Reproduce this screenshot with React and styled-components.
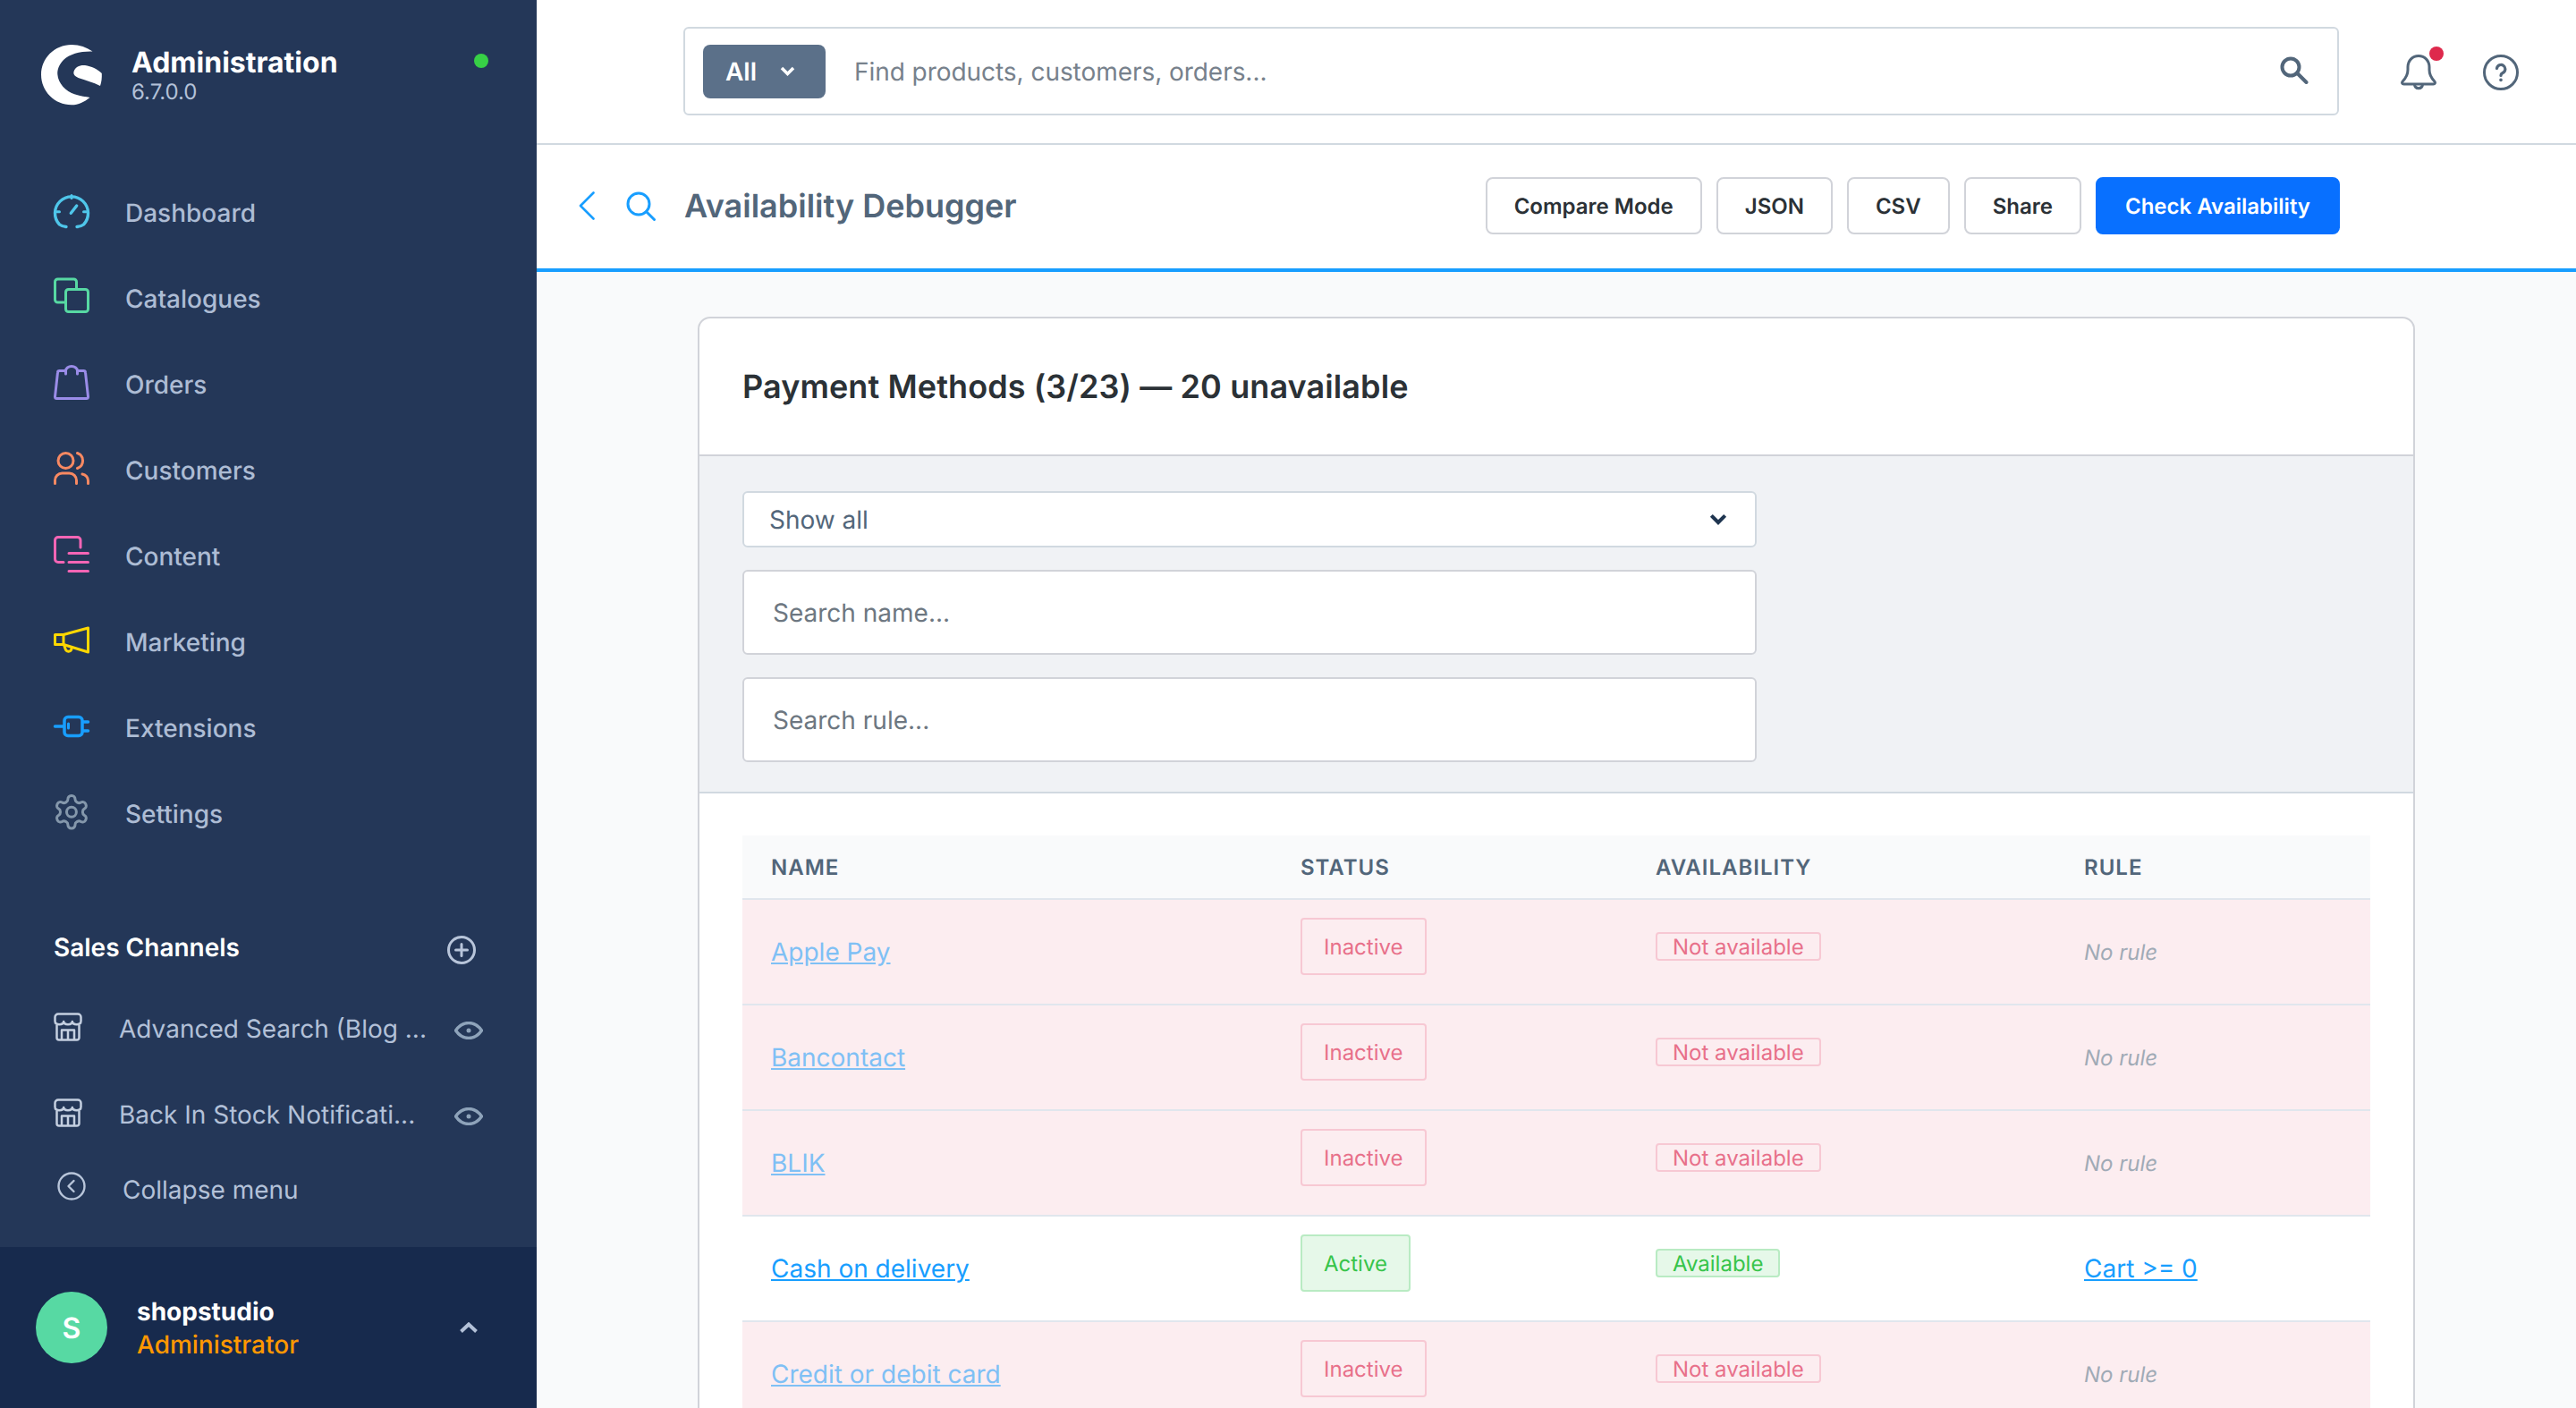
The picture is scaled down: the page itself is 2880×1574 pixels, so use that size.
import React from 'react';
import styled, { createGlobalStyle } from 'styled-components';

const Global = createGlobalStyle`
  html, body { margin: 0; padding: 0; height: 100%; overflow: hidden; background: #f9fafb; }
  body { font-family: Inter, "Liberation Sans", sans-serif; text-rendering: geometricPrecision; }
  * { box-sizing: border-box; }
  input, button { text-rendering: geometricPrecision; }
  #root { height: 100%; }
`;

const Shell = styled.div`
  display: grid;
  grid-template-columns: 600px 1fr;
  height: 1574px;
  overflow: hidden;
`;

const Sidebar = styled.aside`
  display: flex;
  flex-direction: column;
  background: #243758;
  color: #b3c1d8;
  height: 1574px;
`;

const Brand = styled.div`
  height: 190px;
  display: flex;
  align-items: flex-start;
  padding: 50px 54px 0 46px;
`;

const BrandText = styled.div`
  margin-left: 33px;
  flex: 1;
  padding-top: 1px;
`;

const BrandName = styled.div`
  font-size: 32px;
  font-weight: 700;
  line-height: 38px;
  color: #fff;
`;

const BrandVersion = styled.div`
  font-size: 24px;
  line-height: 28px;
  color: #b3c1d8;
`;

const StatusDot = styled.span`
  width: 16px;
  height: 16px;
  border-radius: 50%;
  background: #37d046;
  margin-top: 10px;
`;

const Nav = styled.nav`
  display: flex;
  flex-direction: column;
`;

const NavItem = styled.a`
  display: flex;
  align-items: center;
  height: 96px;
  padding-left: 60px;
  font-size: 28px;
  font-weight: 500;
  color: #adbcd4;
`;

const NavIcon = styled.svg`
  width: 40px;
  height: 44px;
  margin-right: 40px;
  margin-top: -4px;
  flex: none;
  fill: none;
  overflow: visible;
  stroke: ${(p) => p.$color};
  stroke-width: 3;
  stroke-linecap: round;
  stroke-linejoin: round;
`;

const SalesHeader = styled.div`
  display: flex;
  align-items: center;
  justify-content: space-between;
  height: 50px;
  margin: 76px 68px 18px 60px;
  font-size: 28px;
  font-weight: 600;
  color: #fff;
`;

const PlusIcon = styled.svg`
  width: 32px;
  height: 32px;
  margin-top: 6px;
  fill: none;
  stroke: #b8c5da;
  stroke-width: 3;
  stroke-linecap: round;
`;

const ChannelRow = styled.a`
  display: flex;
  align-items: center;
  height: 96px;
  padding: 0 60px;
  font-size: 28px;
  color: #b3c1d8;
`;

const StoreIcon = styled.svg`
  width: 32px;
  height: 32px;
  margin-top: -4px;
  margin-right: 41px;
  flex: none;
  fill: none;
  stroke: #c4cfe0;
  stroke-width: 2.5;
  stroke-linejoin: round;
`;

const ChannelName = styled.span`
  flex: 1;
  white-space: nowrap;
  overflow: hidden;
`;

const EyeIcon = styled.svg`
  width: 32px;
  height: 20px;
  margin-top: 4px;
  flex: none;
  fill: none;
  stroke: #8ea3ba;
  stroke-width: 3.4;
`;

const Collapse = styled.a`
  display: flex;
  align-items: center;
  height: 72px;
  padding-left: 64px;
  font-size: 28px;
  color: #b3c1d8;
`;

const CollapseIcon = styled.svg`
  width: 32px;
  height: 32px;
  margin-right: 41px;
  margin-top: -8px;
  flex: none;
  fill: none;
  stroke: #b8c5da;
  stroke-width: 2.4;
  stroke-linecap: round;
  stroke-linejoin: round;
`;

const Account = styled.div`
  margin-top: auto;
  height: 180px;
  background: #172a4d;
  display: flex;
  align-items: center;
  padding: 0 66px 0 40px;
`;

const Avatar = styled.div`
  width: 80px;
  height: 80px;
  border-radius: 50%;
  background: #57d9a3;
  color: #fff;
  font-size: 32px;
  font-weight: 600;
  display: flex;
  align-items: center;
  justify-content: center;
  flex: none;
`;

const AccountText = styled.div`
  flex: 1;
  margin-left: 33px;
`;

const AccountName = styled.div`
  font-size: 28px;
  font-weight: 700;
  line-height: 38px;
  color: #fff;
`;

const AccountRole = styled.div`
  font-size: 28px;
  font-weight: 500;
  line-height: 36px;
  color: #ff9800;
`;

const AccountChevron = styled.svg`
  width: 20px;
  height: 12px;
  fill: none;
  stroke: #b3c1d8;
  stroke-width: 4;
`;

const Main = styled.main`
  display: flex;
  flex-direction: column;
  min-width: 0;
  height: 1574px;
`;

const TopBar = styled.header`
  height: 162px;
  flex: none;
  background: #fff;
  border-bottom: 2px solid #d1d9e0;
  display: flex;
  align-items: flex-start;
  padding: 30px 64px 0 164px;
`;

const SearchBox = styled.div`
  width: 1851px;
  height: 99px;
  border: 2px solid #d1d9e0;
  border-radius: 6px;
  display: flex;
  align-items: center;
  padding: 0 32px 0 20px;
  background: #fff;
`;

const TypeButton = styled.button`
  width: 137px;
  height: 60px;
  background: #5b7089;
  border: 0;
  border-radius: 8px;
  color: #fff;
  font: 600 28px Inter, sans-serif;
  display: flex;
  align-items: center;
  padding: 0 0 0 25px;
  gap: 26px;
`;

const SmallChevron = styled.svg`
  width: ${(p) => p.$w || 17}px;
  height: ${(p) => (p.$w ? 13 : 11)}px;
  fill: none;
  stroke: ${(p) => p.$color};
  stroke-width: 3.5;
  flex: none;
`;

const GlobalInput = styled.input`
  flex: 1;
  min-width: 0;
  border: 0;
  outline: 0;
  margin-left: 30px;
  font: 400 28px Inter, sans-serif;
  letter-spacing: -0.05px;
  color: #555;
  background: transparent;
  &::placeholder { color: #77818c; opacity: 1; }
`;

const MagnifierDark = styled.svg`
  width: 32px;
  height: 31px;
  fill: none;
  stroke: #52667a;
  stroke-width: 4;
  stroke-linecap: round;
  margin-top: -2px;
`;

const TopIcons = styled.div`
  display: flex;
  align-items: center;
  margin-left: 69px;
  gap: 52px;
  height: 101px;
`;

const BellWrap = styled.div`
  position: relative;
  width: 40px;
  height: 40px;
`;

const Badge = styled.span`
  position: absolute;
  top: -9px;
  left: 32px;
  width: 16px;
  height: 16px;
  border-radius: 50%;
  background: #de294c;
`;

const TopIcon = styled.svg`
  width: 40px;
  height: 40px;
  display: block;
  fill: none;
  stroke: #52667a;
  stroke-width: 3;
  stroke-linecap: round;
  stroke-linejoin: round;
`;

const SmartBar = styled.div`
  height: 142px;
  flex: none;
  background: #fff;
  border-bottom: 4px solid #189eff;
  display: flex;
  align-items: center;
  padding: 0 264px 2px 47px;
`;

const BackIcon = styled.svg`
  width: 18px;
  height: 32px;
  fill: none;
  stroke: #189eff;
  stroke-width: 2.6;
  stroke-linecap: round;
  stroke-linejoin: round;
  flex: none;
`;

const SearchBlue = styled.svg`
  width: 33px;
  height: 33px;
  margin-left: 35px;
  fill: none;
  stroke: #189eff;
  stroke-width: 3;
  stroke-linecap: round;
  flex: none;
`;

const Title = styled.h1`
  margin: 0 0 0 32px;
  font-size: 36px;
  font-weight: 600;
  color: #52667a;
  flex: 1;
`;

const Actions = styled.div`
  display: flex;
  gap: 16px;
`;

const Button = styled.button`
  height: 64px;
  padding: 0 ${(p) => (p.$primary ? 31 : 30)}px;
  border-radius: 8px;
  border: 2px solid ${(p) => (p.$primary ? '#0870ff' : '#d1d3d9')};
  background: ${(p) => (p.$primary ? '#0870ff' : '#fff')};
  color: ${(p) => (p.$primary ? '#fff' : '#2b3136')};
  font: 600 24px Inter, sans-serif;
  white-space: nowrap;
`;

const Content = styled.div`
  flex: 1;
  min-height: 0;
  overflow: hidden;
  background: #f9fafb;
  padding-top: 50px;
`;

const Card = styled.section`
  width: 1920px;
  margin: 0 auto;
  background: #fff;
  border: 2px solid #d1d3d9;
  border-radius: 14px;
`;

const CardHeader = styled.div`
  height: 154px;
  display: flex;
  align-items: center;
  padding-left: 48px;
  border-bottom: 2px solid #d1d3d9;
`;

const CardTitle = styled.h2`
  margin: 0;
  font-size: 36px;
  font-weight: 600;
  letter-spacing: 0.1px;
  color: #2b3136;
`;

const Toolbar = styled.div`
  background: #f0f2f5;
  border-bottom: 2px solid #d1d9e0;
  padding: 39px 48px 33px;
  display: flex;
  flex-direction: column;
  align-items: flex-start;
`;

const SelectBox = styled.div`
  width: 1134px;
  height: 63px;
  background: #fff;
  border: 2px solid #d1d9e0;
  border-radius: 6px;
  display: flex;
  align-items: center;
  justify-content: space-between;
  padding: 0 31px 0 28px;
  font-size: 28px;
  color: #52667a;
  margin-bottom: 25px;
`;

const FilterInput = styled.input`
  width: 1134px;
  height: 95px;
  background: #fff;
  border: 2px solid #d1d3d9;
  border-radius: 6px;
  padding: 0 32px;
  font: 400 28px Inter, sans-serif;
  outline: 0;
  display: block;
  & + & { margin-top: 25px; }
  &::placeholder { color: #6d7781; opacity: 1; }
`;

const TableWrap = styled.div`
  padding: 47px 48px 0;
`;

const Table = styled.table`
  width: 1820px;
  table-layout: fixed;
  border-collapse: collapse;
`;

const Th = styled.th`
  height: 71px;
  width: ${(p) => p.$w}px;
  text-align: left;
  padding: 0 32px;
  background: #f9fafb;
  border-bottom: 2px solid #e0e6ed;
  font-size: 24px;
  font-weight: 600;
  letter-spacing: 1px;
  color: #52667a;
`;

const Tr = styled.tr`
  background: ${(p) => (p.$off ? '#fcedf0' : '#fff')};
`;

const Td = styled.td`
  height: 118px;
  padding: ${(p) => p.$top || 0}px 32px 0;
  vertical-align: ${(p) => (p.$top ? 'top' : 'middle')};
  border-bottom: 2px solid #e0e6ed;
`;

const ItemLink = styled.a`
  font-size: 28px;
  color: ${(p) => (p.$off ? '#7fc0f5' : '#189eff')};
  text-decoration: underline;
`;

const Tag = styled.span`
  display: inline-flex;
  align-items: center;
  height: ${(p) => (p.$large ? 64 : 32)}px;
  padding: 0 ${(p) => (p.$large ? 24 : 17)}px;
  font-size: 24px;
  border-radius: 4px;
  color: ${(p) => (p.$ok ? '#37c44a' : '#e8708a')};
  border: 2px solid ${(p) => (p.$ok ? '#b9ebc3' : '#f7c8d3')};
  background: ${(p) => (p.$ok ? '#e6f8e9' : 'transparent')};
`;

const NoRule = styled.em`
  font-size: 24px;
  color: #a0aab6;
`;

const stores = ['Advanced Search (Blog ...', 'Back In Stock Notificati...'];

const navItems = [
  ['Dashboard', '#4fc6ea', (
    <>
      <path d="M14 39.500C10.500 39.500 8.500 38.500 6.500 37A18.500 18.500 0 1 1 33.500 37C31.500 38.500 29.500 39.500 26 39.500" strokeWidth="3.400" />
      <path d="M20 4.500V7.500M3.500 22.700H6.500M36.500 22.700H33.500" />
      <path d="M19.300 24.300L25.700 16" strokeWidth="3.400" />
    </>
  )],
  ['Catalogues', '#57d9a3', (
    <>
      <rect x="13.500" y="13.500" width="25" height="25" rx="3" />
      <path d="M11.500 28H4.500a3 3 0 0 1-3-3V5a3 3 0 0 1 3-3h18a3 3 0 0 1 3 3v7" />
    </>
  )],
  ['Orders', '#9a8ce8', (
    <>
      <path d="M13.500 8.500H6.500a2 2 0 0 0-2 1.900L1.500 37.500a2 2 0 0 0 2 2H36.500a2 2 0 0 0 2-2L35.500 10.400a2 2 0 0 0-2-1.900H26.500" />
      <path d="M13.500 12V8.500a6.500 5 0 0 1 13 0V12" />
    </>
  )],
  ['Customers', '#f88962', (
    <>
      <circle cx="13.500" cy="13" r="8.500" />
      <path d="M26.500 4.500a9 9 0 0 1 0 17" />
      <path d="M1.500 38.500V35a8 8 0 0 1 8-8h8a8 8 0 0 1 8 8v3.500" />
      <path d="M32 28a7.500 7.500 0 0 1 6.500 7.500v3" />
    </>
  )],
  ['Content', '#f565b5', (
    <>
      <path d="M30 14V6a3.500 3.500 0 0 0-3.500-3.500H5A3.500 3.500 0 0 0 1.500 6v21A3.500 3.500 0 0 0 5 30.500h6" />
      <path d="M17 20.500H38.500M17 30.500H38.500M17 40.500H38.500" />
    </>
  )],
  ['Marketing', '#ffd700', (
    <>
      <path d="M38.500 8V35L11 26.500V15.500Z" />
      <path d="M11 15.500H1.500V26.500H11" />
      <path d="M11.500 27l2 5.500a3.500 3.500 0 0 0 6.500-1.500" />
    </>
  )],
  ['Extensions', '#189eff', (
    <>
      <rect x="12" y="11.500" width="20" height="21" rx="4" strokeWidth="3.500" />
      <path d="M1.500 22H11M33 17H38.500M33 27H38.500" strokeWidth="3.500" />
      <path d="M16.500 19V24" />
    </>
  )],
  ['Settings', '#8497ab', (
    <g transform="translate(-1.900 -0.100) scale(1.820)" strokeWidth="1.650">
      <path d="M12.220 2h-.44a2 2 0 0 0-2 2v.18a2 2 0 0 1-1 1.730l-.43.250a2 2 0 0 1-2 0l-.15-.08a2 2 0 0 0-2.730.730l-.22.380a2 2 0 0 0 .730 2.730l.15.100a2 2 0 0 1 1 1.720v.510a2 2 0 0 1-1 1.740l-.15.090a2 2 0 0 0-.730 2.730l.22.380a2 2 0 0 0 2.730.730l.15-.08a2 2 0 0 1 2 0l.43.250a2 2 0 0 1 1 1.730V20a2 2 0 0 0 2 2h.44a2 2 0 0 0 2-2v-.18a2 2 0 0 1 1-1.730l.43-.25a2 2 0 0 1 2 0l.15.08a2 2 0 0 0 2.730-.73l.22-.39a2 2 0 0 0-.73-2.730l-.15-.08a2 2 0 0 1-1-1.740v-.5a2 2 0 0 1 1-1.740l.15-.09a2 2 0 0 0 .73-2.730l-.22-.38a2 2 0 0 0-2.730-.73l-.15.08a2 2 0 0 1-2 0l-.43-.25a2 2 0 0 1-1-1.730V4a2 2 0 0 0-2-2z" />
      <circle cx="12" cy="12" r="3" />
    </g>
  )],
];

const rows = [
  { name: 'Apple Pay', off: true },
  { name: 'Bancontact', off: true },
  { name: 'BLIK', off: true },
  { name: 'Cash on delivery', off: false, rule: 'Cart >= 0' },
  { name: 'Credit or debit card', off: true },
];

const Logo = () => (
  <svg width="68" height="68" viewBox="0 0 68 68" fill="#fff" style={{ flex: 'none' }}>
    <path d="M34 0C43 0 51 3 57.500 7.500C45 7 32 10 25 17C20 22 18 28 18.300 33C19 43 27 52 38 55.500C44 57.500 50 58 54.500 59C48 64 42 67.300 34 67.300C15 67.300 0 52 0 33.500C0 15 15 0 34 0Z" />
    <path d="M36.500 30C38 25 43 22.500 49 23C56 24 63 27 67.800 32C68 37 67.500 42 66 46C58 42 50 40 43 37.500C39 36 35.500 34 36.500 30Z" />
  </svg>
);

export default function App() {
  return (
    <>
      <Global />
      <Shell>
        <Sidebar>
          <Brand>
            <Logo />
            <BrandText>
              <BrandName>Administration</BrandName>
              <BrandVersion>6.7.0.0</BrandVersion>
            </BrandText>
            <StatusDot />
          </Brand>
          <Nav>
            {navItems.map(([label, color, icon]) => (
              <NavItem key={label}>
                <NavIcon viewBox="0 0 40 44" $color={color}>{icon}</NavIcon>
                {label}
              </NavItem>
            ))}
          </Nav>
          <SalesHeader>
            Sales Channels
            <PlusIcon viewBox="0 0 32 32">
              <circle cx="16" cy="16" r="14.500" />
              <path d="M16 9.500V22.500M9.500 16H22.500" />
            </PlusIcon>
          </SalesHeader>
          {stores.map((s) => (
            <ChannelRow key={s}>
              <StoreIcon viewBox="0 0 32 32">
                <path d="M1.500 10V5a3.500 3.500 0 0 1 3.500-3.500H27a3.500 3.500 0 0 1 3.500 3.500v5" />
                <path d="M1.500 10a4.850 3.500 0 0 0 9.670 0a4.850 3.500 0 0 0 9.660 0a4.850 3.500 0 0 0 9.670 0" />
                <path d="M3.500 14V28a2.500 2.500 0 0 0 2.500 2.500H26a2.500 2.500 0 0 0 2.500-2.500V14" />
                <path d="M9 30V19.500H23V30M16 19.500V30" />
              </StoreIcon>
              <ChannelName>{s}</ChannelName>
              <EyeIcon viewBox="0 0 32 20">
                <path d="M1.500 10C6 3.500 11 1.500 16 1.500S26 3.500 30.500 10C26 16.500 21 18.500 16 18.500S6 16.500 1.500 10Z" />
                <circle cx="16" cy="10" r="2.500" fill="#8ea3ba" stroke="none" />
              </EyeIcon>
            </ChannelRow>
          ))}
          <Collapse>
            <CollapseIcon viewBox="0 0 32 32">
              <circle cx="16" cy="16" r="14.500" />
              <path d="M18.500 10L12.500 16L18.500 22" />
            </CollapseIcon>
            Collapse menu
          </Collapse>
          <Account>
            <Avatar>S</Avatar>
            <AccountText>
              <AccountName>shopstudio</AccountName>
              <AccountRole>Administrator</AccountRole>
            </AccountText>
            <AccountChevron viewBox="0 0 20 12"><path d="M1.500 10.500L10 2.500L18.500 10.500" /></AccountChevron>
          </Account>
        </Sidebar>
        <Main>
          <TopBar>
            <SearchBox>
              <TypeButton>
                All
                <SmallChevron viewBox="0 0 17 11" $color="#fff"><path d="M2 2L8.500 8.500L15 2" /></SmallChevron>
              </TypeButton>
              <GlobalInput placeholder="Find products, customers, orders..." />
              <MagnifierDark viewBox="0 0 32 31">
                <circle cx="12" cy="12" r="9.500" />
                <path d="M19.500 19L29.500 29" />
              </MagnifierDark>
            </SearchBox>
            <TopIcons>
              <BellWrap>
                <TopIcon viewBox="0 0 40 40">
                  <path d="M20 1.500C13 1.500 8 7 8 14V17C8 22.500 5 27 2.200 30C1 31.300 1.500 33 3.500 33H36.500C38.500 33 39 31.300 37.800 30C35 27 32 22.500 32 17V14C32 7 27 1.500 20 1.500Z" />
                  <path d="M15.500 33.500C16 39 24 39 24.500 33.500" />
                </TopIcon>
                <Badge />
              </BellWrap>
              <TopIcon viewBox="0 0 40 40">
                <circle cx="20" cy="20" r="18.500" />
                <path d="M15.500 15.500A4.700 4.700 0 1 1 22 20.500C20.700 21.200 20 22 20 23.500" strokeWidth="3.200" />
                <path d="M20 28.300V28.500" strokeWidth="3.600" />
              </TopIcon>
            </TopIcons>
          </TopBar>
          <SmartBar>
            <BackIcon viewBox="0 0 18 32"><path d="M16.500 1.500L2 16L16.500 30.500" /></BackIcon>
            <SearchBlue viewBox="0 0 33 33">
              <circle cx="14" cy="14" r="12" />
              <path d="M22.500 22.500L31.500 31.500" />
            </SearchBlue>
            <Title>Availability Debugger</Title>
            <Actions>
              <Button>Compare Mode</Button>
              <Button>JSON</Button>
              <Button>CSV</Button>
              <Button>Share</Button>
              <Button $primary>Check Availability</Button>
            </Actions>
          </SmartBar>
          <Content>
            <Card>
              <CardHeader>
                <CardTitle>Payment Methods (3/23) — 20 unavailable</CardTitle>
              </CardHeader>
              <Toolbar>
                <SelectBox>
                  Show all
                  <SmallChevron viewBox="0 0 17 11" $w={20} $color="#1f3550"><path d="M2 2L8.500 8.500L15 2" /></SmallChevron>
                </SelectBox>
                <FilterInput placeholder="Search name..." />
                <FilterInput placeholder="Search rule..." />
              </Toolbar>
              <TableWrap>
                <Table>
                  <thead>
                    <tr>
                      <Th $w={592}>NAME</Th>
                      <Th $w={397}>STATUS</Th>
                      <Th $w={479}>AVAILABILITY</Th>
                      <Th $w={352}>RULE</Th>
                    </tr>
                  </thead>
                  <tbody>
                    {rows.map((r) => (
                      <Tr key={r.name} $off={r.off}>
                        <Td><ItemLink $off={r.off}>{r.name}</ItemLink></Td>
                        <Td $top={20}><Tag $large $ok={!r.off}>{r.off ? 'Inactive' : 'Active'}</Tag></Td>
                        <Td $top={36}><Tag $ok={!r.off}>{r.off ? 'Not available' : 'Available'}</Tag></Td>
                        <Td>{r.rule ? <ItemLink>{r.rule}</ItemLink> : <NoRule>No rule</NoRule>}</Td>
                      </Tr>
                    ))}
                  </tbody>
                </Table>
              </TableWrap>
            </Card>
          </Content>
        </Main>
      </Shell>
    </>
  );
}
